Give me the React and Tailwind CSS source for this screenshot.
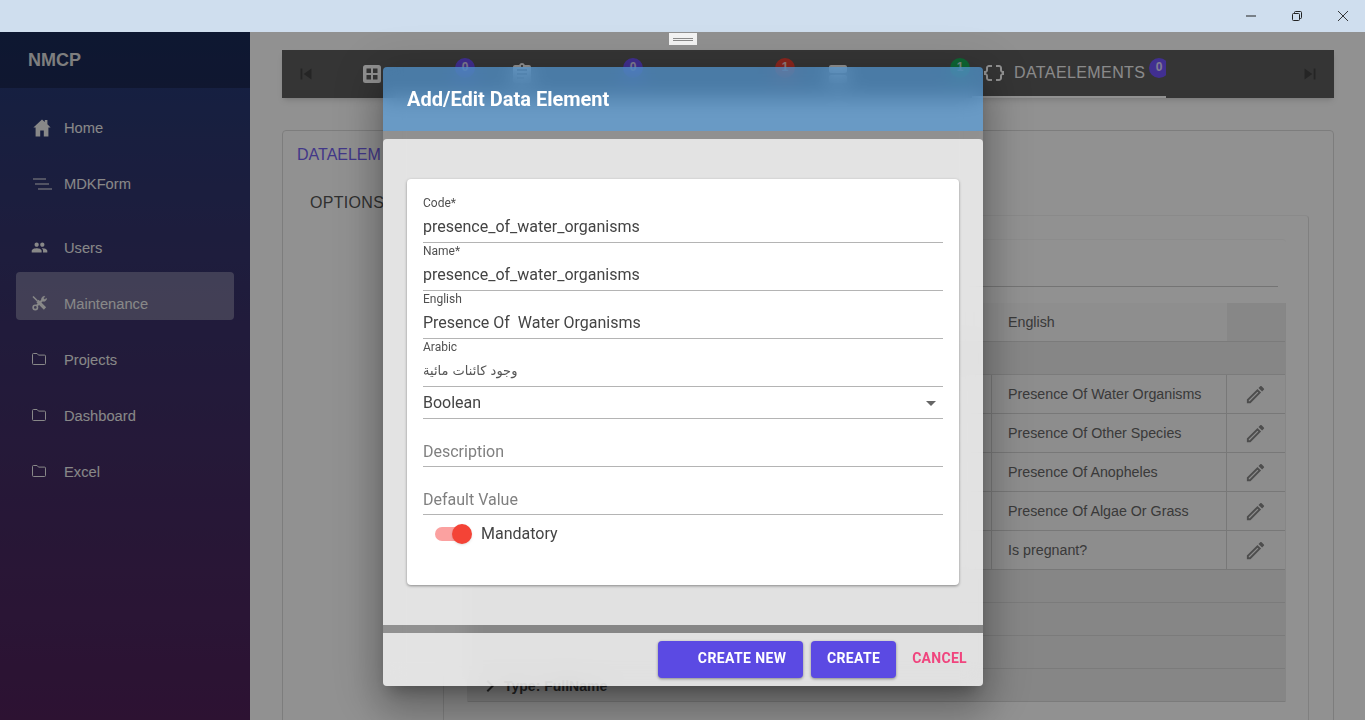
import React from "react";
import { MdPeople, MdSkipPrevious, MdSkipNext, MdDataObject, MdAssignment, MdViewAgenda, MdOutlineEdit, MdArrowDropDown, MdChevronRight } from "react-icons/md";

function HomeIcon() {
  return (
    <svg width="18" height="18" viewBox="0 0 18 18" fill="currentColor" className="ml-px -mt-px">
      <path d="M9 0.5 L11.8 3 V1 H14.4 V5.3 L17.6 8.4 H15.4 V17.5 H10.8 V11.5 H7.2 V17.5 H2.6 V8.4 H0.4 Z" />
    </svg>
  );
}

function LinesIcon() {
  return (
    <svg width="21" height="14" viewBox="0 0 21 14" fill="none" stroke="currentColor" strokeWidth="1.1">
      <path d="M1 2h13M3 7h14M6 12h14" />
    </svg>
  );
}

function ToolsIcon() {
  return (
    <svg width="15" height="16" viewBox="0 0 15 16" fill="none" stroke="currentColor" className="-mt-0.5">
      <path d="M1 1.5 L5.5 6" strokeWidth="1.6" />
      <path d="M5.5 6 L13 13.5" strokeWidth="3.2" />
      <path d="M5 10.5 L10.5 5" strokeWidth="2.2" />
      <circle cx="3.3" cy="12.4" r="2.2" strokeWidth="1.6" />
      <path d="M9.6 5.2 C9 3 10.6 1.2 12.8 1.3 L11.4 3.2 L12.6 4.6 L14.6 3.4 C14.6 5.6 12.4 7 10.4 6 Z" fill="currentColor" strokeWidth="0.6" />
    </svg>
  );
}

function FolderIcon() {
  return (
    <svg width="14" height="12" viewBox="0 0 14 12" fill="none" stroke="currentColor" strokeWidth="1" className="-mt-[3px]">
      <path d="M.5 1.5a1 1 0 0 1 1-1h3.6l1.4 1.6h6a1 1 0 0 1 1 1v7.4a1 1 0 0 1-1 1h-11a1 1 0 0 1-1-1z" />
    </svg>
  );
}

function GridIcon() {
  return (
    <svg width="18" height="18" viewBox="0 0 18 18">
      <rect width="18" height="18" rx="2.5" fill="#ffffff" />
      <rect x="3.5" y="3.5" width="4.5" height="4.5" fill="#5d5d5d" />
      <rect x="10" y="3.5" width="4.5" height="4.5" fill="#5d5d5d" />
      <rect x="3.5" y="10" width="4.5" height="4.5" fill="#5d5d5d" />
      <rect x="10" y="10" width="4.5" height="4.5" fill="#5d5d5d" />
    </svg>
  );
}

const nav = [
  { label: "Home", icon: <HomeIcon /> },
  { label: "MDKForm", icon: <LinesIcon />, gap: true },
  { label: "Users", icon: <MdPeople size={17} className="-ml-px -mt-0.5" /> },
  { label: "Maintenance", icon: <ToolsIcon />, active: true },
  { label: "Projects", icon: <FolderIcon /> },
  { label: "Dashboard", icon: <FolderIcon /> },
  { label: "Excel", icon: <FolderIcon /> },
];

function Badge({ className, children }) {
  return (
    <span className={`absolute top-2 flex h-5 w-5 items-center justify-center rounded-full pb-0.5 text-xs font-bold text-white/80 ${className}`}>
      {children}
    </span>
  );
}

function Field({ label, children }) {
  return (
    <div className="h-12 border-b border-[#b4b4b4] text-[#444444]">
      <div className="h-[17px] pt-px text-xs leading-[14px] text-[#505050]">{label}</div>
      <div className="flex h-[30px] items-center text-base leading-6">{children}</div>
    </div>
  );
}

function Placeholder({ children }) {
  return (
    <div className="flex h-12 items-end border-b border-[#b4b4b4] pb-[2px] text-base leading-6 text-[#808080]">{children}</div>
  );
}

function Row({ text }) {
  return (
    <div className="grid h-[39px] grid-cols-[524px_235px_58px] items-stretch border-b border-[#d4d4d4] bg-[#f8f8f8] text-[14.25px] text-[#666666]">
      <div className="border-r border-[#d4d4d4]" />
      <div className="flex items-center border-r border-[#d4d4d4] pl-4 pt-0.5">{text}</div>
      <div className="flex items-center justify-center pr-px text-[#888888]"><MdOutlineEdit size={23} /></div>
    </div>
  );
}

export default function App() {
  return (
    <div className="relative flex h-[720px] w-[1365px] flex-col overflow-hidden font-['Liberation_Sans',Arial,sans-serif]">
      <div className="flex h-8 shrink-0 justify-end bg-[#cfdeee] text-[#222222]">
        <div className="flex w-[46px] items-center justify-center pl-0.5">
          <svg width="10" height="10" viewBox="0 0 10 10" fill="none" stroke="currentColor"><path d="M0 5h10" /></svg>
        </div>
        <div className="flex w-[46px] items-center justify-center pl-0.5">
          <svg width="10" height="10" viewBox="0 0 10 10" fill="none" stroke="currentColor"><rect x="0.5" y="2.5" width="7" height="7" rx="1" /><path d="M2.5 2.5v-1a1 1 0 0 1 1-1h5a1 1 0 0 1 1 1v5a1 1 0 0 1-1 1h-1" /></svg>
        </div>
        <div className="flex w-[46px] items-center justify-center pl-0.5">
          <svg width="10" height="10" viewBox="0 0 10 10" fill="none" stroke="currentColor" strokeWidth="0.9"><path d="M0 0l10 10M10 0L0 10" /></svg>
        </div>
      </div>

      <div className="flex min-h-0 flex-1">
        <aside className="w-[250px] shrink-0 bg-gradient-to-b from-[#213a74] to-[#4f2059] text-[#efefef]">
          <div className="flex h-14 items-center bg-black/25 pl-7 pb-[1px] text-lg font-bold text-[#dedede]">NMCP</div>
          <nav className="px-4 pt-2">
            {nav.map((n) => (
              <div
                key={n.label}
                className={`flex h-12 items-center rounded pl-4 pt-4 text-[14.7px] ${n.gap ? "mb-4" : "mb-2"} ${n.active ? "bg-white/30" : ""}`}
              >
                <span className="flex w-8 shrink-0 items-center">{n.icon}</span>
                <span>{n.label}</span>
              </div>
            ))}
          </nav>
        </aside>

        <main className="min-w-0 flex-1 overflow-hidden bg-white pt-[18px] pl-8">
          <div className="flex h-12 w-[1052px] items-stretch bg-[#5d5d5d] text-white shadow-md">
            <div className="flex w-12 items-center justify-center text-black/30"><MdSkipPrevious size={22} /></div>
            <div className="relative flex w-[170px] items-center pl-[33px]"><GridIcon /><Badge className="left-[125px] bg-[#7254ff]">0</Badge></div>
            <div className="relative flex w-[150px] items-center pl-[10px]"><MdAssignment size={24} /><Badge className="left-[123px] bg-[#7254ff]">0</Badge></div>
            <div className="relative w-[150px]"><Badge className="left-[125px] bg-[#f44336]">1</Badge></div>
            <div className="relative flex w-[172px] items-center pl-[26px]"><MdViewAgenda size={24} /><Badge className="left-[150px] bg-[#1ab35a]">1</Badge></div>
            <div className="relative flex w-[194px] items-center overflow-hidden border-b-2 border-white pl-[10px] text-base">
              <MdDataObject size={24} />
              <span className="ml-2 tracking-[0.4px] text-[#f2f2f2]">DATAELEMENTS</span>
              <Badge className="left-[177px] bg-[#7254ff]">0</Badge>
            </div>
            <div className="ml-auto flex w-12 items-center justify-center text-black/30"><MdSkipNext size={22} /></div>
          </div>

          <div className="mt-8 h-[640px] w-[1052px] rounded border border-[#dcdcdc]">
            <div className="h-[46px] pl-3.5 pt-3.5 text-base leading-5 text-[#7563f0]">DATAELEM</div>
            <div className="flex">
              <div className="w-[160px] shrink-0 pl-[27px] pt-4 text-base leading-5 tracking-[0.3px] text-[#555555]">OPTIONS</div>
              <div className="mt-[38px] h-[600px] w-[866px] rounded-t border-x border-t border-x-[#e2e2e2] border-t-[#f2f2f2] px-[23px] pt-[23px]">
                <div className="h-[600px] w-[819px] rounded-t border-t border-[#f6f6f6] pt-[46px]">
                  <div className="mr-2 border-b border-[#cccccc]" />
                  <div className="mt-4 border-x border-[#ececec]">
                    <div className="grid h-[39px] grid-cols-[524px_235px_58px] items-stretch border-b border-[#d8d8d8] bg-[#fafafa] text-[14.25px] text-[#666666]">
                      <div />
                      <div className="flex items-center pl-4 pt-0.5">English</div>
                      <div className="bg-[#ededed]" />
                    </div>
                    <div className="h-[33px] border-b border-[#d8d8d8] bg-[#ebebeb]" />
                    <Row text="Presence Of Water Organisms" />
                    <Row text="Presence Of Other Species" />
                    <Row text="Presence Of Anopheles" />
                    <Row text="Presence Of Algae Or Grass" />
                    <Row text="Is pregnant?" />
                    <div className="h-[33px] border-b border-[#d8d8d8] bg-[#ebebeb]" />
                    <div className="h-[33px] border-b border-[#d8d8d8] bg-[#ebebeb]" />
                    <div className="h-[33px] border-b border-[#d8d8d8] bg-[#ebebeb]" />
                    <div className="flex h-[33px] items-center border-b border-[#d8d8d8] bg-[#ebebeb] pl-2.5 pt-px text-sm font-bold text-[#444444]">
                      <MdChevronRight size={24} className="mr-0.5" />Type: FullName
                    </div>
                  </div>
                </div>
              </div>
            </div>
          </div>
        </main>
      </div>

      <div className="absolute inset-x-0 top-8 bottom-0 bg-black/[0.43]">
        <div className="absolute left-[669px] top-px flex h-3 w-7 flex-col items-center justify-center gap-px bg-[#f4f4f4]">
          <div className="h-px w-5 bg-[#8a8a8a]" />
          <div className="h-px w-5 bg-[#8a8a8a]" />
        </div>

        <div className="absolute left-[383px] top-[35px] flex h-[619px] w-[600px] flex-col rounded font-['Roboto',sans-serif] shadow-[0_11px_15px_-7px_rgba(0,0,0,0.25),0_24px_38px_3px_rgba(0,0,0,0.2),0_9px_46px_8px_rgba(0,0,0,0.16)] backdrop-blur-[10px]">
          <div className="flex h-16 shrink-0 items-center rounded-t bg-[#55a0e0]/[0.66] pl-6 text-xl font-bold text-white">Add/Edit Data Element</div>
          <div className="mt-2 flex-1 rounded-t bg-white/75 px-6 pt-10">
            <div className="h-[406px] rounded bg-white px-4 pt-4 shadow-[0_1px_3px_rgba(0,0,0,0.4)]">
              <Field label="Code*">presence_of_water_organisms</Field>
              <Field label="Name*">presence_of_water_organisms</Field>
              <Field label="English">Presence Of&nbsp; Water Organisms</Field>
              <Field label="Arabic"><span dir="rtl" className="font-['DejaVu_Sans',sans-serif] text-[13px] text-[#555555]">وجود كائنات مائية</span></Field>
              <div className="flex h-8 items-center justify-between border-b border-[#b4b4b4] text-base text-[#444444]">
                <span>Boolean</span>
                <MdArrowDropDown size={24} className="text-[#666666]" />
              </div>
              <Placeholder>Description</Placeholder>
              <Placeholder>Default Value</Placeholder>
              <div className="flex h-[38px] items-center pl-3 text-base text-[#444444]">
                <div className="relative h-3.5 w-[34px] rounded-full bg-[#fba1a0]">
                  <div className="absolute -top-[3px] left-[17px] h-5 w-5 rounded-full bg-[#f44336] shadow-sm" />
                </div>
                <span className="ml-3">Mandatory</span>
              </div>
            </div>
          </div>
          <div className="mt-2 flex h-[53px] shrink-0 items-center justify-end rounded-b bg-white/75">
            <button className="h-[37px] w-[145px] rounded bg-[#5b4ae3] pb-1 pl-[23px] text-sm font-bold uppercase tracking-[0.4px] text-white shadow-[0_1px_3px_rgba(0,0,0,0.4)]">Create New</button>
            <button className="ml-2 h-[37px] w-[85px] rounded bg-[#5b4ae3] pb-1 text-sm font-bold uppercase tracking-[0.4px] text-white shadow-[0_1px_3px_rgba(0,0,0,0.4)]">Create</button>
            <button className="ml-4 pb-1 pr-4 text-sm font-bold uppercase tracking-[0.3px] text-[#f0457e]">Cancel</button>
          </div>
        </div>
      </div>
    </div>
  );
}
